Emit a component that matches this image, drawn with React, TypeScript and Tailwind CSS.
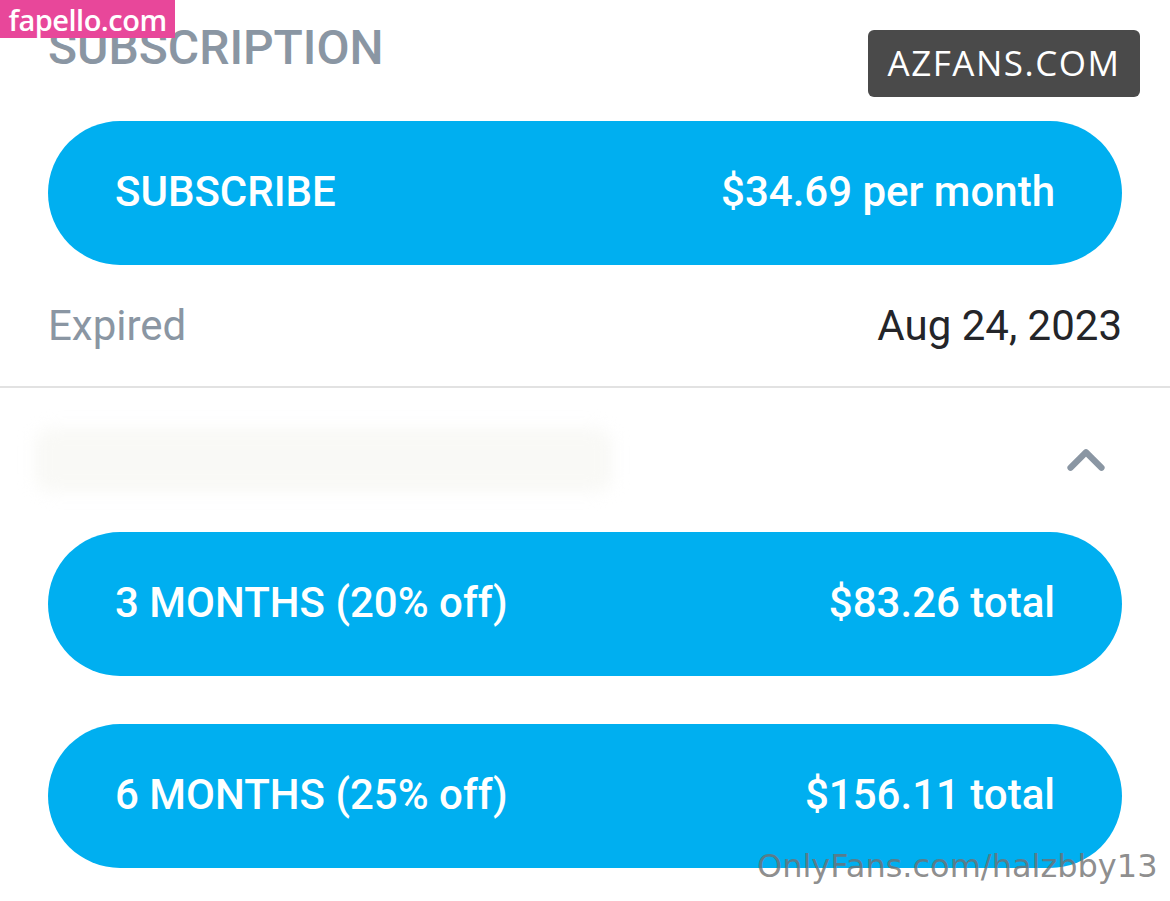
import { ChevronUp } from 'lucide-react';

function PlanButton({ left, right }: { left: string; right: string }) {
  return (
    <button className="w-full h-[144px] rounded-full bg-[#00aff0] text-white flex items-center justify-between px-[67px] pb-[3px] text-[42px] font-medium">
      <span>{left}</span>
      <span>{right}</span>
    </button>
  );
}

export default function App() {
  return (
    <div className="relative w-[1170px] h-[901px] overflow-hidden bg-white" style={{ fontFamily: 'Roboto, "Noto Sans", sans-serif' }}>
      <div className="px-[48px]">
        <div className="h-[121px] pt-[24px]">
          <h2 className="text-[48px] leading-none font-medium text-[#8a96a3]">SUBSCRIPTION</h2>
        </div>
        <PlanButton left="SUBSCRIBE" right="$34.69 per month" />
        <div className="h-[121px] flex items-center justify-between text-[42px]">
          <span className="text-[#8a96a3]">Expired</span>
          <span className="text-[#242529]">Aug 24, 2023</span>
        </div>
      </div>
      <div className="h-[2px] bg-[#e2e2e2]" />
      <div className="px-[48px]">
        <div className="h-[144px] flex items-center justify-between">
          <div className="w-[577px] h-[64px] -ml-[13px] rounded-2xl bg-[#f9f9f6] blur-sm" />
          <ChevronUp className="w-[62px] h-[62px] text-[#8a96a3] mr-[5px]" strokeWidth={2.4} />
        </div>
        <div className="flex flex-col gap-[48px]">
          <PlanButton left="3 MONTHS (20% off)" right="$83.26 total" />
          <PlanButton left="6 MONTHS (25% off)" right="$156.11 total" />
        </div>
      </div>

      <div className="absolute left-0 top-0 h-[38px] w-[175px] bg-[#e8479a] flex items-center justify-center text-white text-[29px] font-semibold leading-none tracking-[-0.5px]" style={{ fontFamily: '"Open Sans", sans-serif' }}>
        fapello.com
      </div>
      <div className="absolute left-[868px] top-[30px] w-[272px] h-[67px] rounded-[6px] bg-[#4a4a4a] flex items-center justify-center text-white text-[35px] tracking-[1.5px]" style={{ fontFamily: '"Open Sans", sans-serif' }}>
        AZFANS.COM
      </div>
      <div className="absolute left-[757px] top-[850px] text-[32px] leading-none text-[#707070]/80" style={{ fontFamily: '"DejaVu Sans", sans-serif' }}>
        OnlyFans.com/halzbby13
      </div>
    </div>
  );
}
